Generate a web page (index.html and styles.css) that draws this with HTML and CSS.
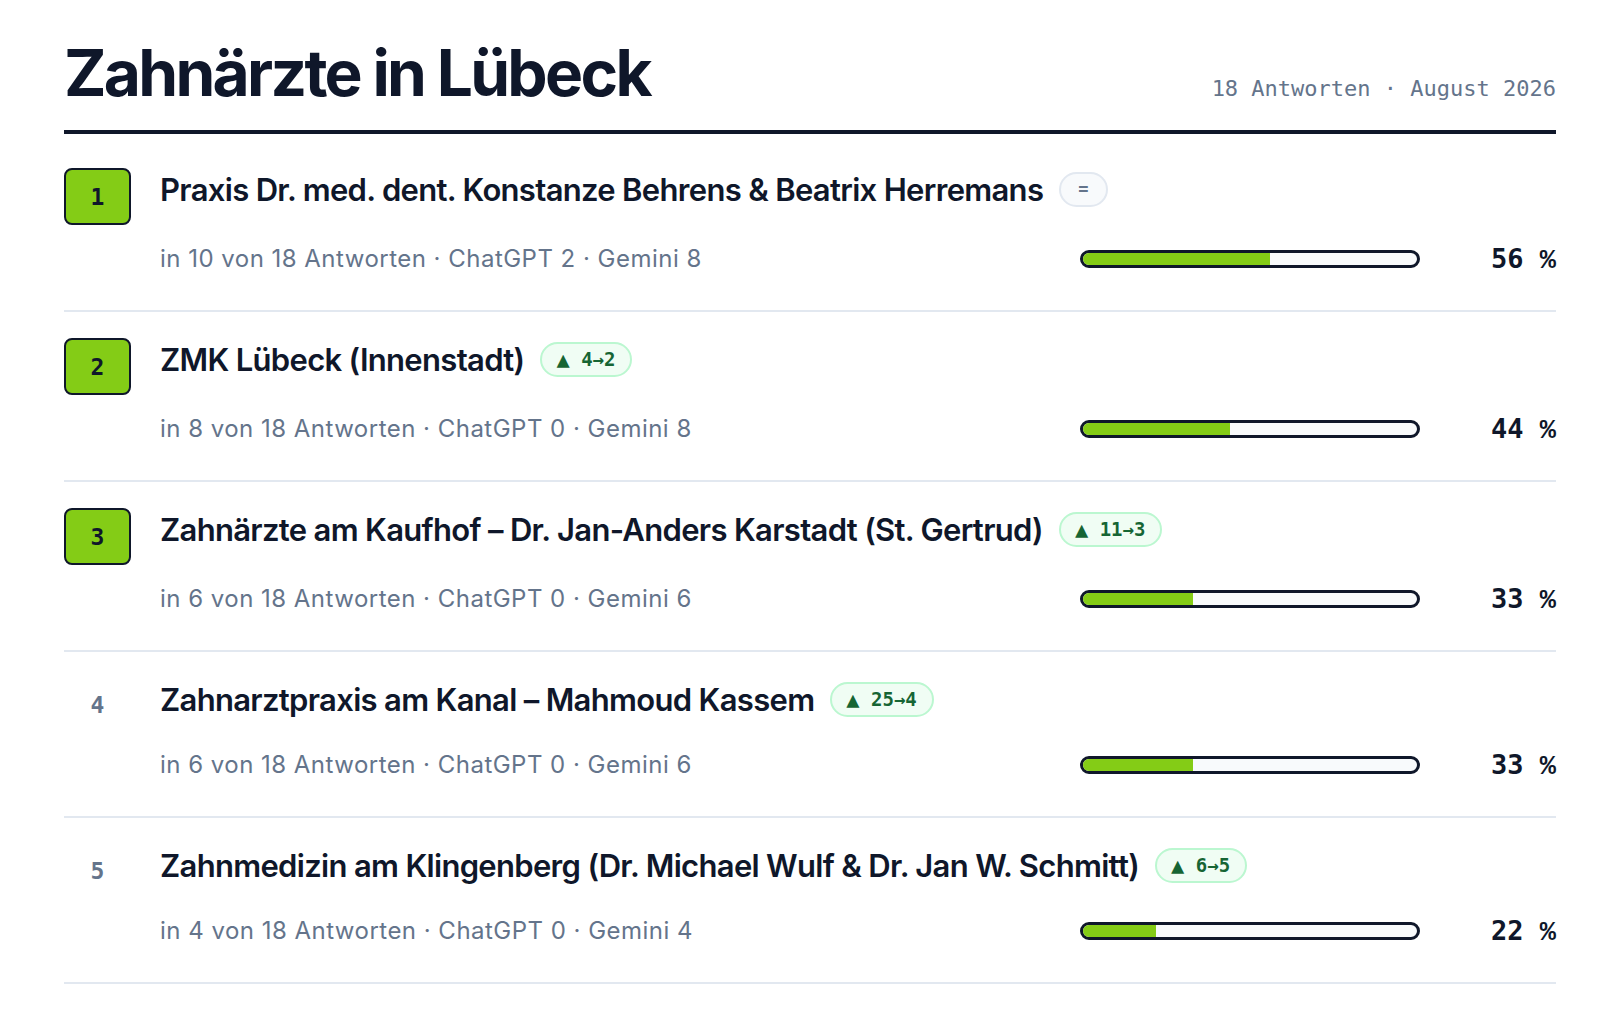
FILE: index.html
```html
<!DOCTYPE html>
<html lang="de">
<head>
<meta charset="utf-8">
<title>Zahnärzte in Lübeck</title>
<link rel="stylesheet" href="styles.css">
</head>
<body>
<main class="page">
  <header class="head">
    <h1 class="title">Zahnärzte in Lübeck</h1>
    <div class="head-meta">18 Antworten · August 2026</div>
  </header>

  <ol class="list">
    <li class="row">
      <div class="num num-box">1</div>
      <div class="name-line">
        <span class="name">Praxis Dr. med. dent. Konstanze Behrens &amp; Beatrix Herremans</span>
        <span class="chip chip-same">=</span>
      </div>
      <div class="meta-line">
        <span class="meta">in 10 von 18 Antworten · ChatGPT 2 · Gemini 8</span>
        <span class="bar"><span class="fill" style="width:56%"></span></span>
        <span class="pct">56 <span class="pct-sign">%</span></span>
      </div>
    </li>
    <li class="row">
      <div class="num num-box">2</div>
      <div class="name-line">
        <span class="name">ZMK Lübeck (Innenstadt)</span>
        <span class="chip chip-up"><span class="tri">▲</span> 4→2</span>
      </div>
      <div class="meta-line">
        <span class="meta">in 8 von 18 Antworten · ChatGPT 0 · Gemini 8</span>
        <span class="bar"><span class="fill" style="width:44%"></span></span>
        <span class="pct">44 <span class="pct-sign">%</span></span>
      </div>
    </li>
    <li class="row">
      <div class="num num-box">3</div>
      <div class="name-line">
        <span class="name">Zahnärzte am Kaufhof – Dr. Jan-Anders Karstadt (St. Gertrud)</span>
        <span class="chip chip-up"><span class="tri">▲</span> 11→3</span>
      </div>
      <div class="meta-line">
        <span class="meta">in 6 von 18 Antworten · ChatGPT 0 · Gemini 6</span>
        <span class="bar"><span class="fill" style="width:33%"></span></span>
        <span class="pct">33 <span class="pct-sign">%</span></span>
      </div>
    </li>
    <li class="row">
      <div class="num num-plain">4</div>
      <div class="name-line">
        <span class="name">Zahnarztpraxis am Kanal – Mahmoud Kassem</span>
        <span class="chip chip-up"><span class="tri">▲</span> 25→4</span>
      </div>
      <div class="meta-line">
        <span class="meta">in 6 von 18 Antworten · ChatGPT 0 · Gemini 6</span>
        <span class="bar"><span class="fill" style="width:33%"></span></span>
        <span class="pct">33 <span class="pct-sign">%</span></span>
      </div>
    </li>
    <li class="row">
      <div class="num num-plain">5</div>
      <div class="name-line">
        <span class="name">Zahnmedizin am Klingenberg (Dr. Michael Wulf &amp; Dr. Jan W. Schmitt)</span>
        <span class="chip chip-up"><span class="tri">▲</span> 6→5</span>
      </div>
      <div class="meta-line">
        <span class="meta">in 4 von 18 Antworten · ChatGPT 0 · Gemini 4</span>
        <span class="bar"><span class="fill" style="width:22%"></span></span>
        <span class="pct">22 <span class="pct-sign">%</span></span>
      </div>
    </li>
  </ol>
</main>
</body>
</html>
```

FILE: styles.css
```css
* { box-sizing: border-box; }

html, body {
  margin: 0;
  padding: 0;
  background: #ffffff;
}

body {
  font-family: Inter, "Noto Sans", "Liberation Sans", sans-serif;
  color: #0f172a;
}

.page {
  padding: 41px 64px 0;
}

.head {
  display: flex;
  justify-content: space-between;
  align-items: baseline;
  padding-bottom: 25px;
  border-bottom: 4px solid #0f172a;
  margin-bottom: 8px;
}

.title {
  margin: 0;
  font-size: 64px;
  line-height: 64px;
  font-weight: 700;
  letter-spacing: -0.042em;
  color: #0f172a;
}

.head-meta {
  font-family: "DejaVu Sans Mono", "Liberation Mono", monospace;
  font-size: 22px;
  color: #64748b;
}

.list {
  list-style: none;
  margin: 0;
  padding: 0;
}

.row {
  display: grid;
  grid-template-columns: 67px 1fr;
  grid-template-rows: auto auto;
  column-gap: 29px;
  row-gap: 18px;
  align-items: start;
  padding: 26px 0 35px;
  border-bottom: 2px solid #e2e8f0;
}

.num {
  grid-row: 1;
  grid-column: 1;
  font-family: "DejaVu Sans Mono", "Liberation Mono", monospace;
  font-weight: 700;
  font-size: 23px;
  display: flex;
  align-items: center;
  justify-content: center;
}

.num-box {
  height: 57px;
  background: #84cc16;
  border: 2px solid #0f172a;
  border-radius: 8px;
  color: #0f172a;
}

.num-plain {
  height: 53px;
  color: #64748b;
}

.name-line {
  grid-row: 1;
  grid-column: 2;
  height: 42px;
  display: flex;
  align-items: center;
  gap: 16px;
}

.name {
  font-size: 31px;
  font-weight: 600;
  letter-spacing: -0.022em;
  color: #0f172a;
  white-space: nowrap;
}

.chip {
  display: inline-flex;
  align-items: center;
  height: 35px;
  padding: 0 15px 0 14px;
  border-radius: 18px;
  border: 2px solid;
  font-family: "DejaVu Sans Mono", "Liberation Mono", monospace;
  font-weight: 700;
  font-size: 19px;
  white-space: pre;
}

.tri {
  font-size: 22px;
}

.chip-same {
  border-color: #e2e8f0;
  background: #f8fafc;
  color: #64748b;
  padding: 0 17px;
  font-size: 17px;
}

.chip-up {
  border-color: #bbf7d0;
  background: #f0fdf4;
  color: #166534;
}

.meta-line {
  grid-row: 2;
  grid-column: 2;
  display: flex;
  align-items: center;
  height: 32px;
}

.meta {
  flex: 1;
  font-size: 24px;
  line-height: 32px;
  letter-spacing: 0.02em;
  color: #64748b;
}

.bar {
  width: 340px;
  height: 18px;
  border: 3px solid #0f172a;
  border-radius: 9px;
  background: #f8fafc;
  overflow: hidden;
  display: flex;
}

.fill {
  display: block;
  height: 100%;
  background: #84cc16;
}

.pct {
  width: 136px;
  text-align: right;
  font-family: "DejaVu Sans Mono", "Liberation Mono", monospace;
  font-weight: 700;
  font-size: 27px;
  color: #0f172a;
  white-space: pre;
}

.pct-sign {
  font-family: "Liberation Mono", "DejaVu Sans Mono", monospace;
}
```
